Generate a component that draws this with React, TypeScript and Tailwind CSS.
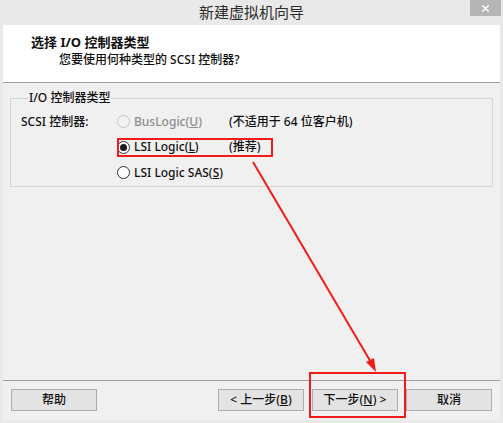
import { X } from "lucide-react";

const font = { fontFamily: '"Noto Sans", "Noto Sans CJK SC", sans-serif' };

function Radio({ checked, disabled }: { checked?: boolean; disabled?: boolean }) {
  return (
    <span
      className={`flex h-[13px] w-[13px] items-center justify-center rounded-full border ${
        disabled ? "border-[#c6c6c6] bg-[#f2f2f2]" : "border-[#333] bg-white"
      }`}
    >
      {checked && <span className="h-[7px] w-[7px] rounded-full bg-[#1a1a1a]" />}
    </span>
  );
}

function Btn({ children }: { children: React.ReactNode }) {
  return (
    <button className="flex h-[22px] w-[86px] items-center justify-center border border-[#adadad] bg-[#e3e3e3] text-[12px] font-medium text-[#111]">
      {children}
    </button>
  );
}

export default function App() {
  return (
    <div
      className="relative flex h-[423px] w-[503px] flex-col bg-[#e9e9e9] px-[3px] pb-[3px] text-[#111]"
      style={font}
    >
      {/* TITLE BAR */}
      <div className="relative flex h-[25px] shrink-0 items-center justify-center">
        <span className="text-[15px] text-[#2b2b2b]">新建虚拟机向导</span>
        <div className="absolute -right-[1px] top-0 flex h-[16px] w-[31px] items-center justify-center bg-[#b5b5b5]">
          <X size={11} strokeWidth={3} className="text-white" />
        </div>
      </div>

      {/* CONTENT */}
      <div className="flex flex-1 flex-col bg-[#f0f0f0]">
        {/* HEADER */}
        <div className="flex h-[58px] shrink-0 flex-col border-b border-[#a0a0a0] bg-white pl-[28px] pt-[8px]">
          <div className="text-[13px] font-bold leading-[18px]">选择 I/O 控制器类型</div>
          <div className="pl-[28px] text-[12px] font-medium leading-[18px]">您要使用何种类型的 SCSI 控制器?</div>
        </div>

        {/* BODY */}
        <div className="flex-1 px-[7px] pt-[7px]">
          <fieldset className="h-[97px] border border-[#d5d5d5] pl-[10px]">
            <legend className="ml-[7px] px-[1px] text-[12px] font-medium leading-[16px]">I/O 控制器类型</legend>
            <div className="mt-[3px] grid grid-cols-[96px_112px_auto] items-center text-[12px] font-medium">
              <div className="flex h-[25px] items-center">SCSI 控制器:</div>
              <div className="flex items-center gap-[4px] text-[#8d8d8d]">
                <Radio disabled />
                <span>
                  BusLogic(<span className="underline">U</span>)
                </span>
              </div>
              <div>(不适用于 64 位客户机)</div>

              <div className="h-[26px]" />
              <div className="flex items-center gap-[4px]">
                <Radio checked />
                <span>
                  LSI Logic(<span className="underline">L</span>)
                </span>
              </div>
              <div>(推荐)</div>

              <div className="h-[25px]" />
              <div className="col-span-2 flex items-center gap-[4px]">
                <Radio />
                <span>
                  LSI Logic SAS(<span className="underline">S</span>)
                </span>
              </div>
            </div>
          </fieldset>
        </div>

        {/* FOOTER */}
        <div className="flex h-[40px] shrink-0 items-center border-t border-[#a0a0a0] px-[8px] pb-[2px]">
          <Btn>帮助</Btn>
          <div className="flex-1" />
          <div className="flex gap-[8px]">
            <Btn>
              &lt; 上一步(<span className="underline">B</span>)
            </Btn>
            <Btn>
              下一步(<span className="underline">N</span>) &gt;
            </Btn>
            <Btn>取消</Btn>
          </div>
        </div>
      </div>

      {/* ANNOTATIONS */}
      <div className="pointer-events-none absolute left-[117px] top-[138px] h-[19px] w-[156px] border-2 border-[#f21b1b]" />
      <div className="pointer-events-none absolute left-[309px] top-[372px] h-[46px] w-[97px] border-2 border-[#f21b1b]" />
      <svg className="pointer-events-none absolute left-0 top-0" width="503" height="423">
        <line x1="253" y1="162" x2="372" y2="364" stroke="#f21b1b" strokeWidth="2" />
        <polygon points="376,372 366,362 374,358" fill="#f21b1b" />
      </svg>
    </div>
  );
}
